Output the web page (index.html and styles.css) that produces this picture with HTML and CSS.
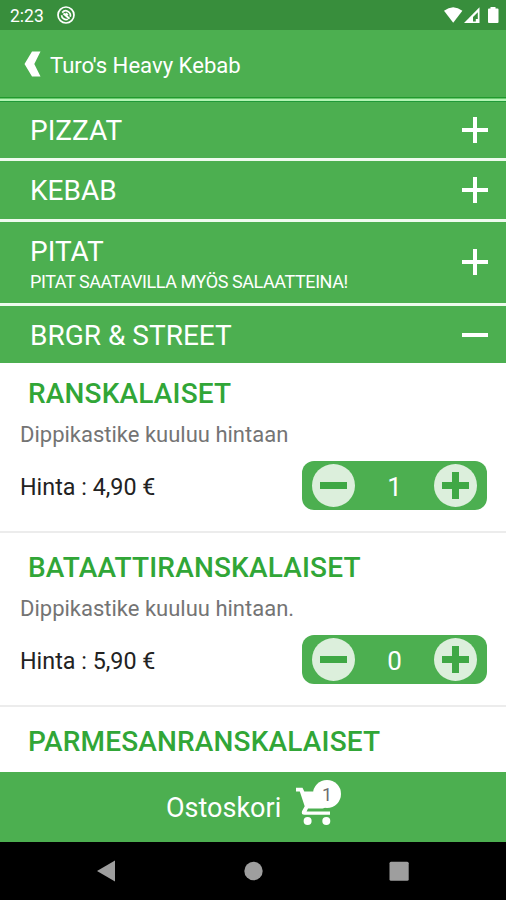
FILE: index.html
```html
<!DOCTYPE html>
<html lang="fi">
<head>
	<meta charset="UTF-8">
	<meta name="viewport" content="width=device-width, initial-scale=1.0">
	<title>Turo's Heavy Kebab</title>
	<link rel="stylesheet" href="styles.css">
</head>
<body>
	<div class="app">
		<div class="status">
			<span class="time">2:23</span>
			<svg class="notify" width="18" height="18" viewBox="0 0 18 18" fill="none" stroke="#fff">
				<circle cx="9" cy="9" r="8" stroke-width="1.7"/>
				<path d="M5.2 6.6A4.6 4.6 0 0 1 13.2 10.8M4.6 9.2A4.5 4.5 0 0 0 10.8 13.2" stroke-width="1.7"/>
				<path d="M6.5 7.5L12.5 12.8M8.5 7.3L11 9" stroke-width="2"/>
			</svg>
			<svg class="signals" width="56" height="18" viewBox="0 0 56 18" fill="#fff">
				<path d="M0 4.8Q9.2 -2.4 18.4 4.8L9.2 16.8Z"/>
				<path d="M20 17L35.5 1.3V17Z"/>
				<path d="M29 15.5V11L33.8 6.3V13H31.8V15.5Z" fill="#388e3c"/>
				<path d="M46.5 1H51.5V2.5H53.5Q54.5 2.5 54.5 3.5V16Q54.5 17 53.5 17H45Q44 17 44 16V3.5Q44 2.5 45 2.5H46.5Z"/>
			</svg>
		</div>

		<div class="header">
			<svg class="back" width="17" height="26" viewBox="0 0 17 26"><path d="M8 0.5H16.5L10.3 13L16.5 25.5H8L0.5 13Z" fill="#fff"/></svg>
			<h1>Turo's Heavy Kebab</h1>
		</div>

		<div class="category first">
			<h2>PIZZAT</h2>
			<span class="toggle plus"></span>
		</div>
		<div class="category">
			<h2>KEBAB</h2>
			<span class="toggle plus"></span>
		</div>
		<div class="category tall">
			<div>
				<h2>PITAT</h2>
				<p>PITAT SAATAVILLA MYÖS SALAATTEINA!</p>
			</div>
			<span class="toggle plus"></span>
		</div>
		<div class="category open">
			<h2>BRGR &amp; STREET</h2>
			<span class="toggle"></span>
		</div>

		<div class="items">
			<div class="item">
				<h3>RANSKALAISET</h3>
				<p class="desc">Dippikastike kuuluu hintaan</p>
				<div class="row">
					<span class="price">Hinta : 4,90 €</span>
					<div class="counter">
						<span class="btn"></span>
						<span class="count">1</span>
						<span class="btn add"></span>
					</div>
				</div>
			</div>
			<div class="item">
				<h3>BATAATTIRANSKALAISET</h3>
				<p class="desc">Dippikastike kuuluu hintaan.</p>
				<div class="row">
					<span class="price">Hinta : 5,90 €</span>
					<div class="counter">
						<span class="btn"></span>
						<span class="count">0</span>
						<span class="btn add"></span>
					</div>
				</div>
			</div>
			<div class="item">
				<h3>PARMESANRANSKALAISET</h3>
			</div>
		</div>

		<div class="cart">
			<span class="label">Ostoskori</span>
			<div class="cart-icon">
				<svg width="38" height="39" viewBox="0 0 38 39" fill="#fff">
					<path d="M0 0.8H6.5L8.3 4.4H35L29.5 19.5Q28.6 21.4 26.6 21.4H12L10.6 24.4H34V27.8H8.5Q5 27.8 6 24.3L8.7 19.3L3.8 4.4H0Z"/>
					<circle cx="11.6" cy="34" r="4"/>
					<circle cx="30.3" cy="34" r="4"/>
				</svg>
				<span class="badge">1</span>
			</div>
		</div>

		<div class="navbar">
			<svg width="506" height="58" viewBox="0 0 506 58" fill="#9e9e9e">
				<path d="M97 29L115 18.5V39.5Z"/>
				<circle cx="253.5" cy="29" r="9.2"/>
				<rect x="389.5" y="19.7" width="19.2" height="19" rx="1.5"/>
			</svg>
		</div>
	</div>
</body>
</html>
```
FILE: styles.css
```css
* {
	margin: 0;
	padding: 0;
	box-sizing: border-box;
}

body {
	font-family: Roboto, "Liberation Sans", sans-serif;
	background: #fff;
}

h1, h2, h3 {
	font-weight: 400;
}

svg {
	display: block;
}

.app {
	display: flex;
	flex-direction: column;
	width: 506px;
	height: 900px;
	overflow: hidden;
}

.status {
	display: flex;
	align-items: center;
	flex: none;
	height: 30px;
	padding: 0 6px 0 10px;
	background: #388e3c;
	color: #fff;
}

.time {
	width: 47px;
	font-size: 17.5px;
	line-height: 30px;
	padding-top: 1px;
}

.signals {
	margin-left: auto;
}

.header {
	display: flex;
	align-items: center;
	flex: none;
	height: 72px;
	padding: 0 0 4px 24px;
	background: linear-gradient(#4caf50 0 67px, #1f9a2c 67px 68px, #b4f5b4 69px 71px, #1f9a38 71px);
	color: #fff;
}

.header h1 {
	margin-left: 9px;
	font-size: 22.1px;
	padding-top: 2px;
}

.category {
	display: flex;
	align-items: center;
	justify-content: space-between;
	flex: none;
	height: 60.5px;
	padding: 0 18px 0 30px;
	border-bottom: 3px solid #eefbee;
	background: #4caf50;
	color: #fff;
}

.category.first {
	height: 59px;
	padding-bottom: 1px;
}

.category h2 {
	font-size: 28px;
	line-height: 34px;
	padding-top: 2px;
}

.category.tall {
	height: 84.5px;
}

.category.tall h2 {
	padding-top: 4px;
}

.category.tall p {
	font-size: 18px;
	line-height: 24px;
	padding-top: 1px;
	letter-spacing: -0.42px;
}

.category.open {
	height: 57px;
	padding-bottom: 0;
	border-bottom: 0;
}

.toggle {
	width: 26px;
	height: 26px;
	background: linear-gradient(#fff, #fff) center / 26px 4px no-repeat;
}

.toggle.plus {
	background: linear-gradient(#fff, #fff) center / 26px 4px no-repeat,
		linear-gradient(#fff, #fff) center / 4px 26px no-repeat;
}

.items {
	flex: 1;
	min-height: 0;
	overflow: hidden;
}

.item {
	height: 174px;
	padding: 18px 19px 0 20px;
	border-bottom: 2px solid #ececec;
}

.item:first-child {
	height: 170px;
	padding-top: 14px;
}

.item h3 {
	padding-left: 8px;
	font-size: 28px;
	line-height: 34px;
	font-weight: 500;
	letter-spacing: 0.17px;
	color: #31a637;
}

.desc {
	margin-top: 10px;
	font-size: 22px;
	line-height: 28px;
	color: #747474;
}

.row {
	display: flex;
	align-items: center;
	justify-content: space-between;
	margin-top: 12px;
}

.price {
	font-size: 23.3px;
	padding-top: 3px;
	color: #222;
}

.counter {
	display: flex;
	align-items: center;
	justify-content: space-between;
	width: 185px;
	height: 49px;
	padding: 0 10px;
	border-radius: 12px;
	background: #4caf50;
}

.btn {
	width: 43px;
	height: 43px;
	border-radius: 50%;
	background: linear-gradient(#3fa845, #3fa845) center / 27px 7px no-repeat, #dcefdc;
}

.btn.add {
	background: linear-gradient(#3fa845, #3fa845) center / 27px 7px no-repeat,
		linear-gradient(#3fa845, #3fa845) center / 7px 27px no-repeat, #dcefdc;
}

.count {
	font-size: 26px;
	padding-top: 2px;
	color: #fff;
}

.cart {
	display: flex;
	flex: none;
	height: 70px;
	padding-left: 166px;
	background: #4caf50;
	color: #fff;
}

.label {
	width: 130px;
	font-size: 27px;
	line-height: 72px;
}

.cart-icon {
	position: relative;
	padding-top: 15px;
}

.badge {
	position: absolute;
	left: 17px;
	top: 8px;
	width: 28px;
	height: 28px;
	border-radius: 50%;
	background: #fff;
	color: #6d6d6d;
	font-size: 18px;
	line-height: 29px;
	text-align: center;
}

.navbar {
	flex: none;
	height: 58px;
	background: #000;
}
```
